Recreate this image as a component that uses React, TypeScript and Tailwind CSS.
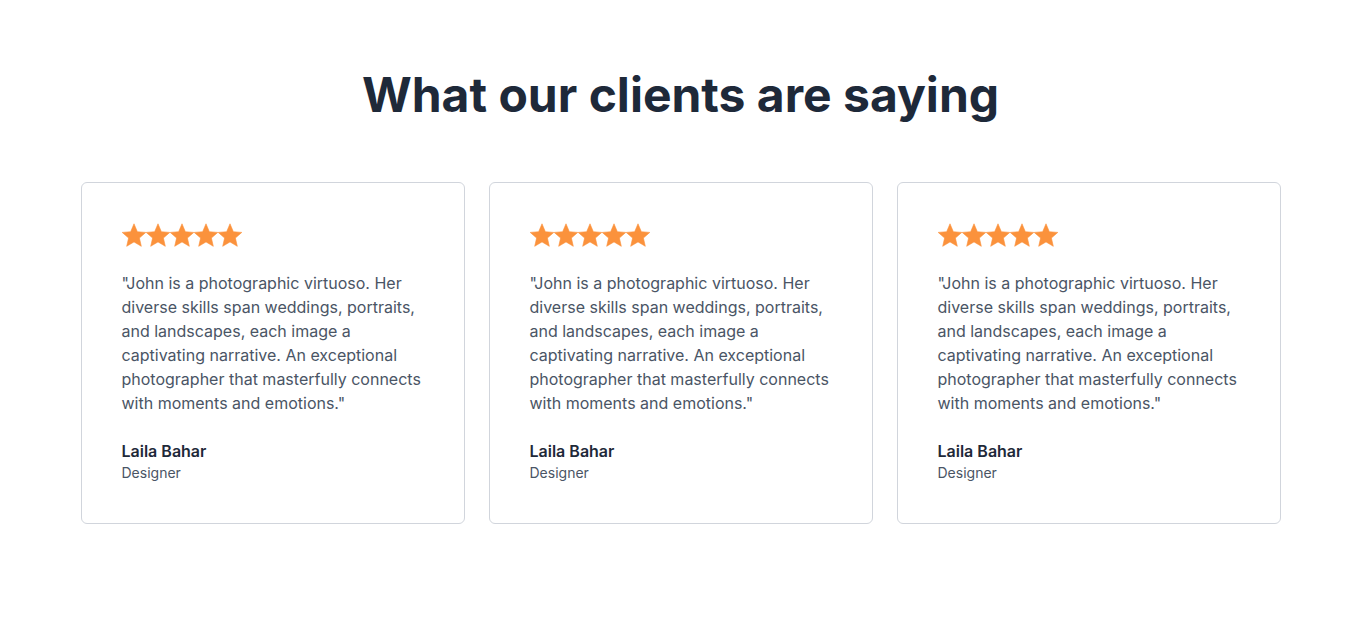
const reviews = [
  { name: 'Laila Bahar', role: 'Designer' },
  { name: 'Laila Bahar', role: 'Designer' },
  { name: 'Laila Bahar', role: 'Designer' },
];

const quote =
  '"John is a photographic virtuoso. Her diverse skills span weddings, portraits, and landscapes, each image a captivating narrative. An exceptional photographer that masterfully connects with moments and emotions."';

function StarIcon() {
  return (
    <svg viewBox="0 0 24 24" className="w-6 h-6 fill-[#fb923c]">
      <path d="M12 0.8 L15.35 8.7 L23.8 9.4 L17.42 15 L19.3 23.3 L12 18.9 L4.7 23.3 L6.58 15 L0.2 9.4 L8.65 8.7 Z" strokeLinejoin="round" stroke="#fb923c" strokeWidth="0.6" />
    </svg>
  );
}

export default function App() {
  return (
    <section className="min-h-screen bg-white pt-[71px] pb-16 font-['Inter',sans-serif]">
      <div className="max-w-[1200px] mx-auto translate-x-[1px]">
        <h2 className="text-5xl leading-none font-bold text-center text-gray-800 mb-[63px]">
          What our clients are saying
        </h2>

        <div className="grid grid-cols-3 gap-6">
          {reviews.map((review, index) => (
            <div key={index} className="border border-gray-300 rounded-md p-10">
              <div className="flex mb-6">
                {[0, 1, 2, 3, 4].map((i) => (
                  <StarIcon key={i} />
                ))}
              </div>
              <p className="text-base leading-6 text-gray-600">{quote}</p>
              <div className="mt-6">
                <div className="text-base leading-6 font-semibold text-gray-800">{review.name}</div>
                <div className="text-sm leading-5 text-gray-600">{review.role}</div>
              </div>
            </div>
          ))}
        </div>
      </div>
    </section>
  );
}
